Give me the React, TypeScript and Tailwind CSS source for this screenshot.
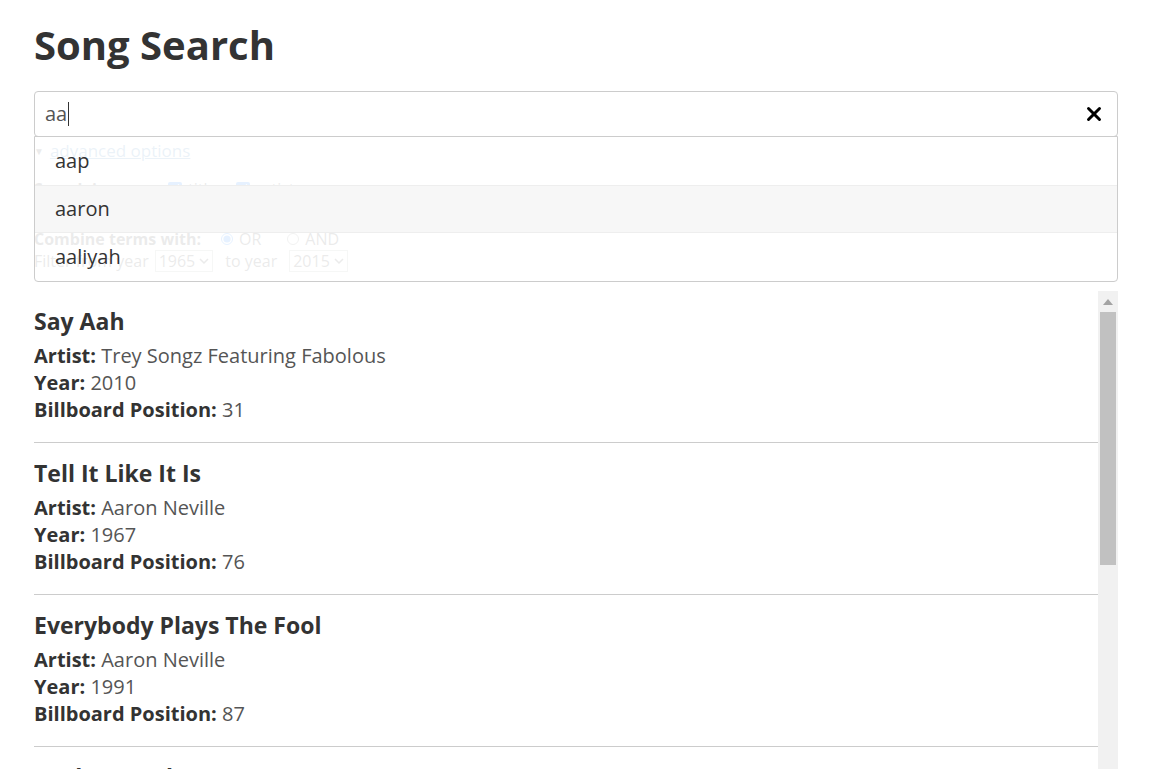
import { X } from "lucide-react"

interface Song {
  title: string
  artist: string
  year: number
  position: number
}

const songs: Song[] = [
  { title: "Say Aah", artist: "Trey Songz Featuring Fabolous", year: 2010, position: 31 },
  { title: "Tell It Like It Is", artist: "Aaron Neville", year: 1967, position: 76 },
  { title: "Everybody Plays The Fool", artist: "Aaron Neville", year: 1991, position: 87 },
  { title: "Back & Forth", artist: "Aaliyah", year: 1994, position: 35 },
]

const suggestions = ["aap", "aaron", "aaliyah"]

function YearSelect({ value }: { value: number }) {
  return (
    <div className="flex h-[22px] items-center gap-[4px] border border-[#aaa] px-[3px] text-[16px]">
      <span>{value}</span>
      <svg width="10" height="7" viewBox="0 0 10 7">
        <path d="M1 1l4 4 4-4" fill="none" stroke="#333" strokeWidth="1.5" />
      </svg>
    </div>
  )
}

function AdvancedOptions() {
  return (
    <div className="flex h-[154px] flex-col pt-[2px] text-[16px]">
      <div className="flex h-[24px] items-center gap-[6px]">
        <span className="text-[10px]">▼</span>
        <span className="text-[17px] text-[#337ab7] underline">advanced options</span>
      </div>
      <div className="mt-[14px] flex h-[24px] items-center gap-[6px]">
        <span className="w-[128px] font-bold">Search in:</span>
        <input type="checkbox" defaultChecked className="h-[14px] w-[14px]" />
        <span className="w-[42px]">title</span>
        <input type="checkbox" defaultChecked className="h-[14px] w-[14px]" />
        <span>artist</span>
      </div>
      <div className="mt-[27px] flex h-[22px] items-center gap-[6px]">
        <span className="mr-[14px] font-bold">Combine terms with:</span>
        <input type="radio" name="combine" defaultChecked className="h-[12px] w-[12px]" />
        <span className="mr-[20px]">OR</span>
        <input type="radio" name="combine" className="h-[12px] w-[12px]" />
        <span>AND</span>
      </div>
      <div className="flex h-[22px] items-center gap-[6px]">
        <span>Filter from year</span>
        <YearSelect value={1965} />
        <span className="mx-[6px]">to year</span>
        <YearSelect value={2015} />
      </div>
    </div>
  )
}

function SongItem({ song }: { song: Song }) {
  return (
    <div className="border-b border-[#ccc] pt-[14px] pb-[19px]">
      <h2 className="mb-[5px] text-[23px] leading-[32px] font-bold text-[#333]">{song.title}</h2>
      <div className="text-[20px] leading-[27px] text-[#555]">
        <div>
          <span className="font-bold text-[#333]">Artist:</span> {song.artist}
        </div>
        <div>
          <span className="font-bold text-[#333]">Year:</span> {song.year}
        </div>
        <div>
          <span className="font-bold text-[#333]">Billboard Position:</span> {song.position}
        </div>
      </div>
    </div>
  )
}

function Scrollbar() {
  return (
    <div className="flex w-[20px] shrink-0 flex-col bg-[#f1f1f1]">
      <div className="flex h-[21px] items-center justify-center">
        <svg width="10" height="6" viewBox="0 0 10 6">
          <path d="M0 6L5 0l5 6z" fill="#a3a3a3" />
        </svg>
      </div>
      <div className="mx-[2px] h-[253px] bg-[#c1c1c1]" />
    </div>
  )
}

export default function App() {
  return (
    <div className="h-screen overflow-hidden bg-white pr-[32px] pl-[34px] font-['Open_Sans',sans-serif] text-[#333]">
      <h1 className="pt-[19px] text-[40px] leading-[52px] font-bold text-[#333]">Song Search</h1>

      <div className="relative mt-[20px]">
        <div className="flex h-[46px] items-center rounded-[4px] border border-[#ccc] pr-[12px] pl-[10px] text-[20px] text-[#555]">
          <span>aa</span>
          <span className="ml-[1px] h-[24px] w-px bg-[#333]" />
          <div className="flex-1" />
          <X size={22} strokeWidth={3.2} className="text-black" />
        </div>

        <div className="absolute top-[45px] right-0 left-0 z-10 rounded-b-[4px] border border-[#ccc] bg-white/90 text-[20px] text-[#333]">
          {suggestions.map((s, i) => (
            <div
              key={s}
              className={
                i === 1
                  ? "flex h-[48px] items-center border-t border-b border-[#eee] bg-[#f7f7f7] px-[20px]"
                  : "flex h-[48px] items-center px-[20px]"
              }
            >
              {s}
            </div>
          ))}
        </div>
      </div>

      <AdvancedOptions />

      <div className="flex h-[600px]">
        <div className="flex-1 overflow-hidden">
          {songs.map((s) => (
            <SongItem key={s.title} song={s} />
          ))}
        </div>
        <Scrollbar />
      </div>
    </div>
  )
}
